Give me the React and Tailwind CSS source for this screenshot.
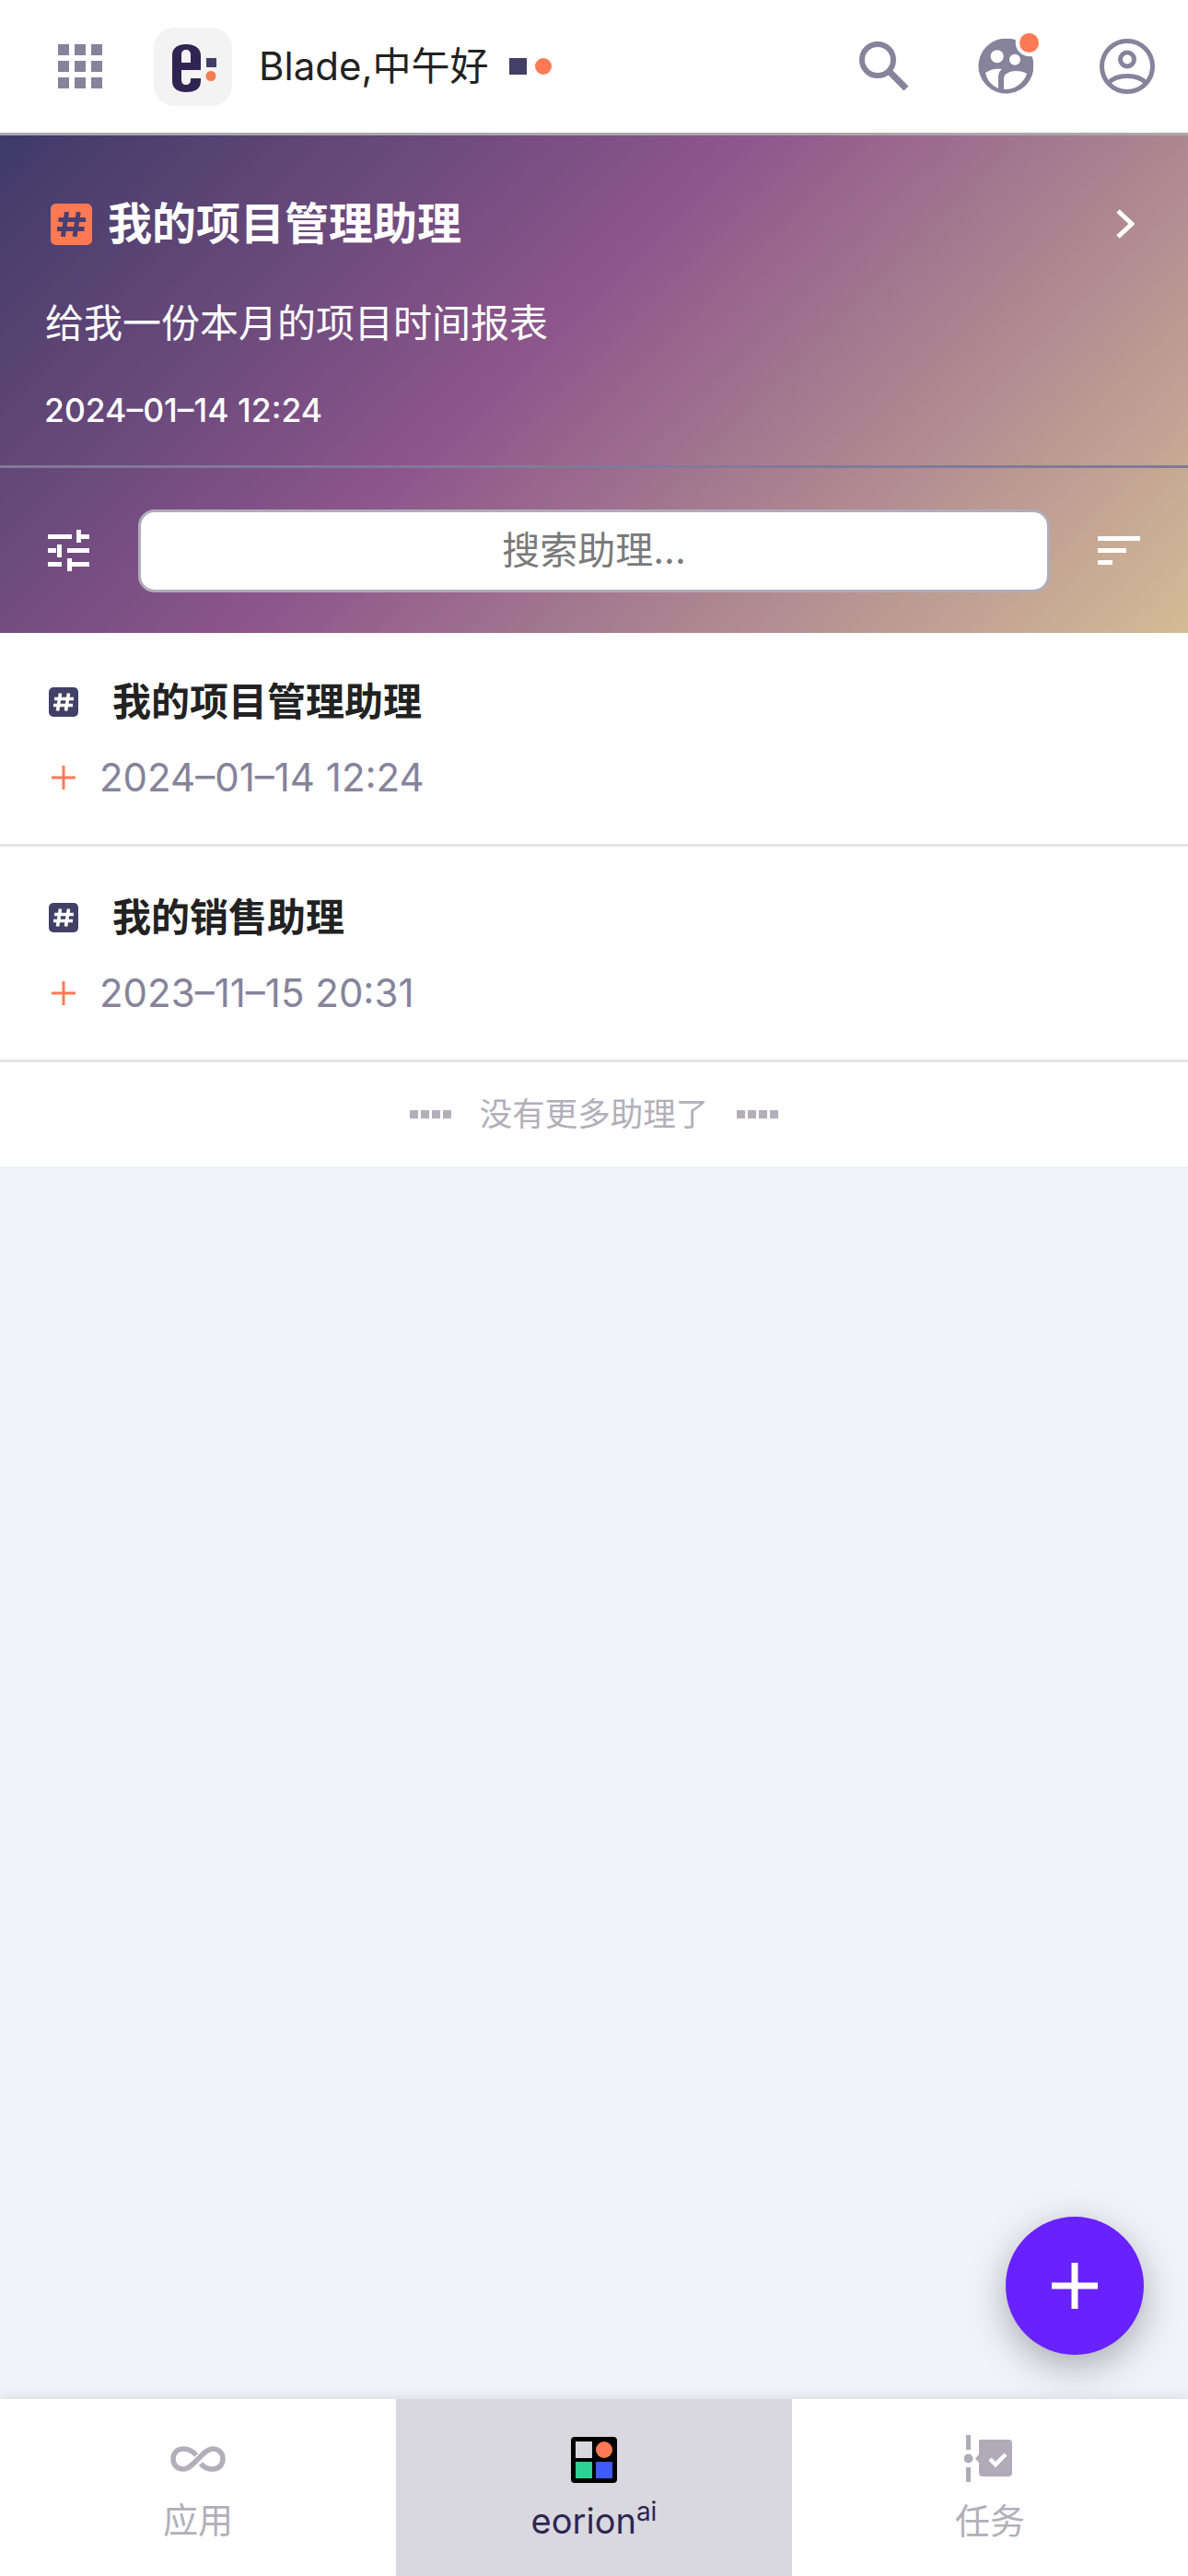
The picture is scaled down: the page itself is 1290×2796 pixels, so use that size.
import React from 'react';

const font = 'font-["Inter","Noto_Sans_CJK_SC",sans-serif]';

const GridIcon = () => (
  <div className="grid w-[48px] grid-cols-3 gap-[6px]">
    {Array.from({ length: 9 }).map((_, i) => (
      <div key={i} className="h-[12px] w-[12px] bg-[#86839b]" />
    ))}
  </div>
);

const Logo = () => (
  <div className="ml-[56px] flex h-[85px] w-[85px] items-center justify-center rounded-[22px] bg-[#f3f3f3]">
    <svg width="85" height="85" viewBox="0 0 85 85">
      <path
        fillRule="evenodd"
        d="M20 30c0-8 6-12 15-12s16 4 16 12v16H30v11c0 3 2 5 5 5s5-2 5-5v-2h11v3c0 9-7 12-16 12s-15-4-15-12zM30 29c0-3 2-5 5-5s5 2 5 5v9H30z"
        fill="#2f2552"
      />
      <rect x="57" y="33" width="11" height="10" fill="#433f66" />
      <circle cx="62" cy="52.500" r="5.500" fill="#f47b56" />
    </svg>
  </div>
);

const SearchIcon = () => (
  <svg width="54" height="54" viewBox="0 0 54 54" fill="none" stroke="#86839b">
    <circle cx="20" cy="20" r="17" strokeWidth="6" />
    <path d="M33 33 L51 51" strokeWidth="7" />
  </svg>
);

const GroupIcon = () => (
  <div className="relative h-[60px] w-[60px]">
    <svg width="60" height="60" viewBox="0 0 60 60">
      <path
        d="M41 1.500A30 30 0 1 0 58.500 19A15 15 0 0 1 41 1.500Z"
        fill="#86839b"
      />
      <circle cx="20.700" cy="19.300" r="7" fill="#fff" />
      <circle cx="40" cy="22.700" r="6" fill="#fff" />
      <path d="M8 37C13 33 20 32 26 33C23 35 22 38 22 42V54A24 24 0 0 1 8 37Z" fill="#fff" />
      <path d="M28 55V43C28 38 35 35 41 35C46 35 50 36 53 38A25 25 0 0 1 28 55Z" fill="#fff" />
    </svg>
    <div className="absolute right-[-6px] top-[-6px] h-[21px] w-[21px] rounded-full bg-[#ff7a54]" />
  </div>
);

const UserIcon = () => (
  <svg width="60" height="60" viewBox="0 0 60 60" fill="none" stroke="#86839b" strokeWidth="5">
    <circle cx="30" cy="30" r="27.500" />
    <circle cx="30" cy="22.500" r="7.500" />
    <path d="M10 48C15 42 22 40.500 30 40.500C38 40.500 45 42 50 48" />
  </svg>
);

const HashTag = ({ size, bg, fg, radius }) => (
  <svg width={size} height={size} viewBox="0 0 32 32" className="shrink-0">
    <rect width="32" height="32" rx={radius} fill={bg} />
    <path d="M12.500 6.500 L9.500 25.500 M21.500 6.500 L18.500 25.500 M6 12.500 H27 M5 19.500 H26" stroke={fg} strokeWidth="3.600" fill="none" />
  </svg>
);

const FilterIcon = () => (
  <svg width="45" height="45" viewBox="0 0 45 45" fill="#fff">
    <rect x="0" y="5" width="26" height="5" />
    <rect x="31" y="0" width="5" height="14" />
    <rect x="36" y="5" width="9" height="5" />
    <rect x="0" y="20" width="9" height="5" />
    <rect x="10" y="16" width="5" height="14" />
    <rect x="21" y="20" width="24" height="5" />
    <rect x="0" y="35" width="15" height="5" />
    <rect x="21" y="31" width="5" height="14" />
    <rect x="26" y="35" width="19" height="5" />
  </svg>
);

const SortIcon = () => (
  <svg width="46" height="31" viewBox="0 0 46 31" fill="#fff">
    <rect x="0" y="0" width="46" height="5" />
    <rect x="0" y="13" width="31" height="5" />
    <rect x="0" y="26" width="16" height="5" />
  </svg>
);

const PlusSmall = () => (
  <svg width="26" height="26" viewBox="0 0 26 26" className="shrink-0" fill="#ff7a54">
    <rect x="0" y="11.500" width="26" height="3" />
    <rect x="11.500" y="0" width="3" height="26" />
  </svg>
);

const assistants = [
  { title: '我的项目管理助理', date: '2024–01–14 12:24' },
  { title: '我的销售助理', date: '2023–11–15 20:31' },
];

const AssistantRow = ({ title, date }) => (
  <div className="h-[234px] border-b-[3px] border-[#e5e5e5] bg-white pl-[53px] pt-[52px] first:h-[232px] first:pt-[50px]">
    <div className="flex h-[50px] items-center">
      <HashTag size={32} bg="#433f66" fg="#fff" radius={5} />
      <span className="ml-[37px] text-[42px] font-bold leading-[50px] text-[#222222]">{title}</span>
    </div>
    <div className="mt-[32px] flex h-[50px] items-center pl-[3px]">
      <PlusSmall />
      <span className="ml-[26px] text-[42px] leading-[50px] text-[#86839b]">{date}</span>
    </div>
  </div>
);

const Dashes = () => (
  <div className="flex gap-[3px]">
    <div className="h-[9px] w-[9px] bg-[#b3afba]" />
    <div className="h-[9px] w-[9px] bg-[#b3afba]" />
    <div className="h-[9px] w-[9px] bg-[#b3afba]" />
    <div className="h-[9px] w-[9px] bg-[#b3afba]" />
  </div>
);

const InfinityIcon = () => (
  <svg width="60" height="28" viewBox="0 0 60 28" fill="none" stroke="#b3afba" strokeWidth="5.500">
    <path d="M28 10 C24 5 19 3 14 3 C7 3 3 8 3 14 C3 20 7 25 14 25 C25 25 35 3 46 3 C53 3 57 8 57 14 C57 20 53 25 46 25 C41 25 36 23 33 19" />
  </svg>
);

const EorionIcon = () => (
  <svg width="50" height="50" viewBox="0 0 50 50">
    <rect width="50" height="50" rx="4" fill="#000" />
    <rect x="5" y="5" width="18" height="18" fill="#d9d8de" />
    <circle cx="36" cy="14" r="9" fill="#ff7a54" />
    <rect x="5" y="27" width="18" height="18" fill="#2ad294" />
    <rect x="27" y="27" width="18" height="18" fill="#3f5bff" />
  </svg>
);

const TaskIcon = () => (
  <svg width="56" height="51" viewBox="0 0 56 51">
    <rect x="2" y="0" width="5" height="16" fill="#b0abb8" />
    <rect x="2" y="35" width="5" height="16" fill="#b0abb8" />
    <circle cx="4.500" cy="25.500" r="5" fill="#b0abb8" />
    <path d="M16 5h32a4 4 0 0 1 4 4v32a4 4 0 0 1-4 4H20a4 4 0 0 1-4-4V30l-4-4.500 4-4.500z" fill="#b0abb8" />
    <path d="M28 26l6 6 11-11" fill="none" stroke="#fff" strokeWidth="4.500" />
  </svg>
);

const App = () => {
  return (
    <div className={`relative flex h-[2796px] w-[1290px] flex-col overflow-hidden bg-[#f1f3f9] ${font}`}>
      {/* Top bar */}
      <header className="flex h-[147px] shrink-0 items-center border-b-[3px] border-[#a9a9a9] bg-white pl-[63px] pr-[36px]">
        <GridIcon />
        <Logo />
        <span className="ml-[29px] text-[42px] leading-[50px] text-[#222222]">Blade,中午好</span>
        <div className="ml-[22px] h-[18px] w-[19px] bg-[#433f66]" />
        <div className="ml-[9px] h-[18px] w-[18px] rounded-full bg-[#ff7a54]" />
        <div className="ml-auto flex items-center">
          <SearchIcon />
          <div className="ml-[75px]"><GroupIcon /></div>
          <div className="ml-[72px]"><UserIcon /></div>
        </div>
      </header>

      {/* Gradient hero */}
      <section className="h-[540px] shrink-0 bg-[linear-gradient(135deg,#3e3a67_0%,#8d568c_44%,#d3bc96_100%)] text-white">
        <div className="h-[358px] pl-[49px] pr-[58px] pt-[72px]">
          <div className="flex h-[48px] items-center">
            <div className="ml-[6px]"><HashTag size={45} bg="#ff7a54" fg="#4a3f70" radius={4} /></div>
            <span className="ml-[17px] text-[48px] font-bold leading-[48px]">我的项目管理助理</span>
            <svg width="20" height="32" viewBox="0 0 20 32" fill="none" stroke="#fff" strokeWidth="5" className="ml-auto">
              <path d="M2 2 L17 16 L2 30" />
            </svg>
          </div>
          <div className="mt-[54px] text-[42px] leading-[60px]">给我一份本月的项目时间报表</div>
          <div className="-ml-[1px] mt-[41px] text-[35.500px] font-medium leading-[48px]">2024–01–14 12:24</div>
        </div>
        <div className="h-[3px] bg-[#807a9a]" />
        <div className="flex h-[179px] items-center pl-[52px] pr-[52px]">
          <FilterIcon />
          <div className="ml-[53px] flex h-[90px] w-[990px] items-center justify-center rounded-[18px] border-[3px] border-[#b0acbb] bg-white text-[41px] text-[#7a7a7a]">
            搜索助理...
          </div>
          <div className="ml-auto"><SortIcon /></div>
        </div>
      </section>

      {/* List */}
      <div className="shrink-0">
        {assistants.map((item) => (
          <AssistantRow key={item.title} title={item.title} date={item.date} />
        ))}
        <div className="flex h-[113px] items-center justify-center gap-[31px] bg-white text-[35.500px] text-[#b3afba]">
          <Dashes />
          <span>没有更多助理了</span>
          <Dashes />
        </div>
      </div>

      <div className="flex-1" />

      {/* Floating add button */}
      <button className="absolute left-[1092px] top-[2406px] flex h-[150px] w-[150px] items-center justify-center rounded-full bg-[#6722ff] shadow-[0_12px_40px_rgba(0,0,0,0.3)]">
        <svg width="50" height="50" viewBox="0 0 50 50" fill="#fff">
          <rect x="0" y="21.500" width="50" height="7" />
          <rect x="21.500" y="0" width="7" height="50" />
        </svg>
      </button>

      {/* Tab bar */}
      <nav className="grid h-[192px] shrink-0 grid-cols-[430px_430px_430px] bg-white shadow-[0_-2px_14px_rgba(0,0,0,0.1)]">
        <div className="flex flex-col items-center pt-[51px]">
          <InfinityIcon />
          <span className="mt-[27px] text-[38px] leading-[50px] text-[#b3afba]">应用</span>
        </div>
        <div className="flex flex-col items-center bg-[#d9d8de] pt-[41px]">
          <EorionIcon />
          <span className="mt-[16px] text-[38px] leading-[50px] text-[#2f2552]">
            eorion<sup className="text-[28px] leading-none">ai</sup>
          </span>
        </div>
        <div className="flex flex-col items-center pt-[39px]">
          <TaskIcon />
          <span className="mt-[17px] text-[38px] leading-[50px] text-[#b3afba]">任务</span>
        </div>
      </nav>
    </div>
  );
};

export default App;
